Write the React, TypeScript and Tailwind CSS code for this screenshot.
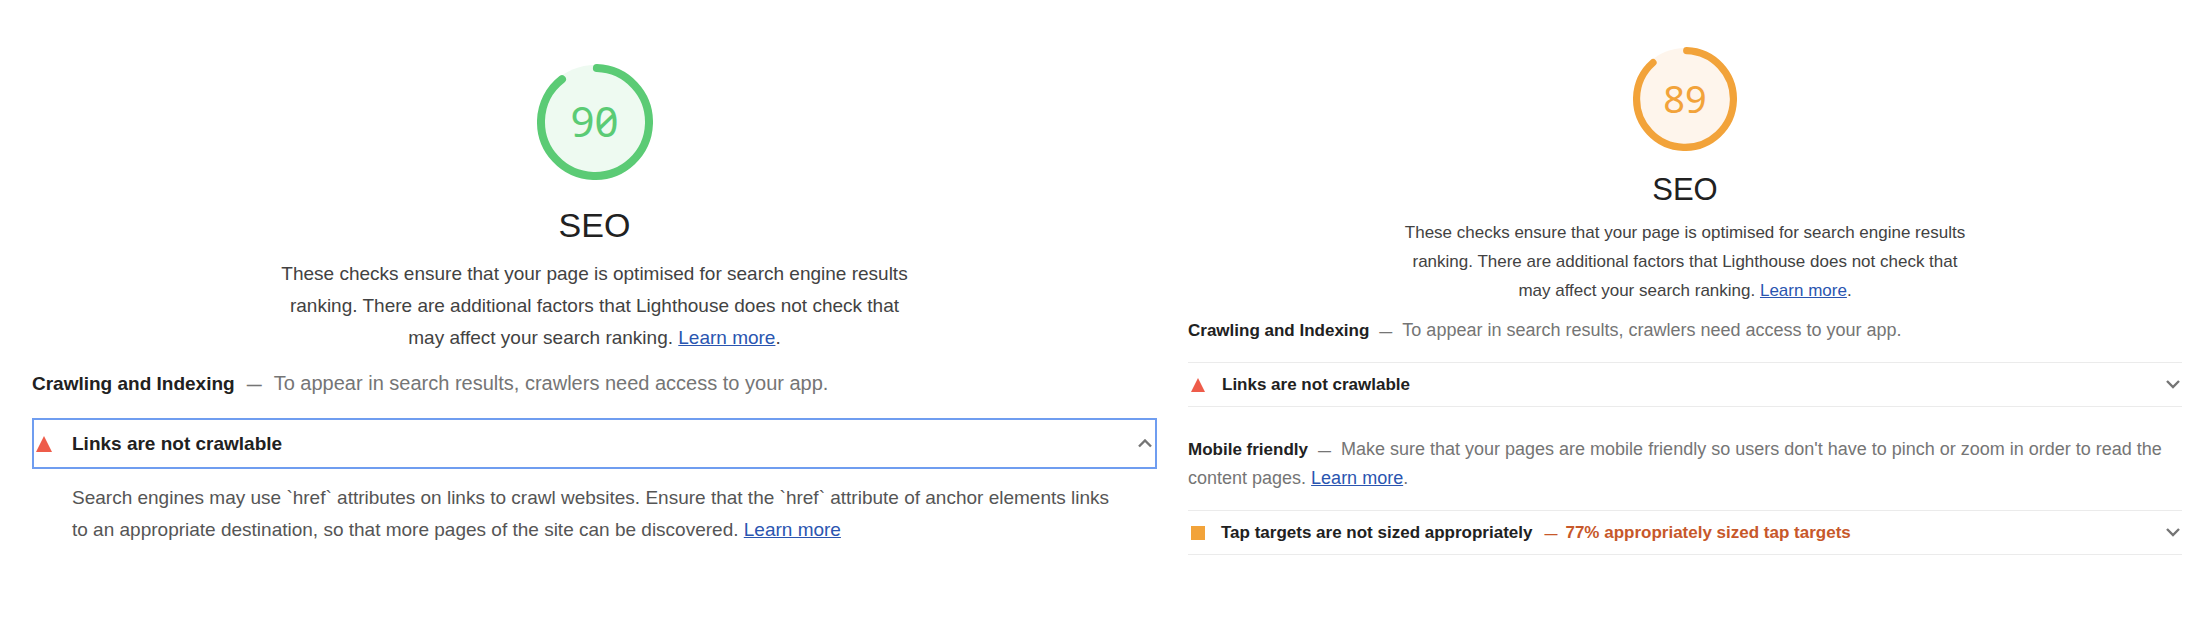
import type { ReactNode } from "react";

function LearnMore() {
  return (
    <a href="#learn-more" className="text-[#2a55b0] underline">
      Learn more
    </a>
  );
}

type GaugeProps = { score: number; className: string; track: string };

function Gauge({ score, className, track }: GaugeProps) {
  const circumference = 2 * Math.PI * 54;
  return (
    <div className={`grid place-items-center font-['Noto_Sans',sans-serif] slashed-zero ${className}`}>
      <svg viewBox="0 0 116 116" className="col-start-1 row-start-1 h-full w-full" aria-hidden="true">
        <circle cx="58" cy="58" r="57" fill={track} />
        <circle
          cx="58"
          cy="58"
          r="54"
          fill="none"
          stroke="currentColor"
          strokeWidth="8"
          strokeLinecap="round"
          strokeDasharray={`${(score / 100) * circumference - 4} ${circumference}`}
          transform="rotate(-88 58 58)"
        />
      </svg>
      <span className="col-start-1 row-start-1 pb-0.5">{score}</span>
    </div>
  );
}

function Summary({ className }: { className: string }) {
  return (
    <p className={`mx-auto text-center text-[#424242] ${className}`}>
      These checks ensure that your page is optimised for search engine results ranking. There are additional factors
      that Lighthouse does not check that may affect your search ranking. <LearnMore />.
    </p>
  );
}

type GroupHeaderProps = { title: string; className: string; titleSize: string; dashSize: string; children: ReactNode };

function GroupHeader({ title, className, titleSize, dashSize, children }: GroupHeaderProps) {
  return (
    <p className={`text-[#757575] ${className}`}>
      <span className={`leading-none font-bold text-[#212121] ${titleSize}`}>{title}</span>
      <span className={`leading-none font-bold ${dashSize}`}>—</span>
      {children}
    </p>
  );
}

function Chevron({ up = false }: { up?: boolean }) {
  return (
    <svg viewBox="0 0 14 9" className="ml-auto h-[9px] w-3.5 shrink-0" aria-hidden="true">
      <path d={up ? "M1 7.5 7 1.5l6 6" : "M1 1l6 6 6-6"} fill="none" stroke="#757575" strokeWidth="2.4" />
    </svg>
  );
}

function Triangle() {
  return (
    <svg viewBox="0 0 16 16" className="h-full w-full" aria-hidden="true">
      <path d="M8 0l8 16H0z" fill="#ee5c4a" />
    </svg>
  );
}

export default function App() {
  return (
    <main className="grid grid-cols-[1125fr_994fr] items-start gap-[31px] bg-white pr-5 pb-12 pl-8 font-['Liberation_Sans',Arial,sans-serif] text-[#212121]">
      <section className="pt-16 text-[19px] leading-8">
        <Gauge score={90} track="#eefaf1" className="mx-auto size-[116px] text-[42px] text-[#5bcb75]" />
        <h2 className="mt-[23px] text-center text-[34px] leading-11">SEO</h2>
        <Summary className="mt-[11px] max-w-[640px]" />
        <GroupHeader
          title="Crawling and Indexing"
          className="mt-[13px] text-[20px] leading-8"
          titleSize="text-[19px]"
          dashSize="mx-3 text-[15px]"
        >
          To appear in search results, crawlers need access to your app.
        </GroupHeader>
        <button
          type="button"
          aria-expanded="true"
          className="mt-[19px] flex h-[51px] w-full items-center border-2 border-[#6f9df0] pr-[3px] pl-[2px] text-left"
        >
          <span className="mr-5 size-4">
            <Triangle />
          </span>
          <span className="font-bold">Links are not crawlable</span>
          <Chevron up />
        </button>
        <p className="mt-[13px] pr-9 pl-10 text-[#555555]">
          Search engines may use `href` attributes on links to crawl websites. Ensure that the `href` attribute of
          anchor elements links to an appropriate destination, so that more pages of the site can be discovered.{" "}
          <LearnMore />
        </p>
      </section>

      <section className="pt-[47px] text-[17px] leading-[29px]">
        <Gauge score={89} track="#fef5ec" className="mx-auto size-[104px] text-[38px] text-[#f2a33a]" />
        <h2 className="mt-[19px] text-center text-[31px] leading-10">SEO</h2>
        <Summary className="mt-2 max-w-[572px]" />
        <GroupHeader
          title="Crawling and Indexing"
          className="mt-[11px] text-[18px] leading-[29px]"
          titleSize="text-[17px]"
          dashSize="mx-2.5 text-[13px]"
        >
          To appear in search results, crawlers need access to your app.
        </GroupHeader>
        <button
          type="button"
          aria-expanded="false"
          className="mt-[17px] flex h-[45px] w-full items-center border-y border-[#ebebeb] pr-[2px] pl-[3px] text-left"
        >
          <span className="mr-[17px] size-3.5">
            <Triangle />
          </span>
          <span className="font-bold">Links are not crawlable</span>
          <Chevron />
        </button>
        <GroupHeader
          title="Mobile friendly"
          className="mt-7 text-[18px] leading-[29px]"
          titleSize="text-[17px]"
          dashSize="mx-2.5 text-[13px]"
        >
          Make sure that your pages are mobile friendly so users don't have to pinch or zoom in order to read the
          content pages. <LearnMore />.
        </GroupHeader>
        <button
          type="button"
          aria-expanded="false"
          className="mt-[17px] flex h-[45px] w-full items-center border-y border-[#ebebeb] pr-[2px] pl-[3px] text-left font-bold"
        >
          <span className="mr-4 size-3.5 bg-[#f2a33a]" />
          <span>Tap targets are not sized appropriately</span>
          <span className="ml-3 text-[#c7582a]">
            <span className="mr-2 text-[13px] leading-none">—</span>
            77% appropriately sized tap targets
          </span>
          <Chevron />
        </button>
      </section>
    </main>
  );
}
